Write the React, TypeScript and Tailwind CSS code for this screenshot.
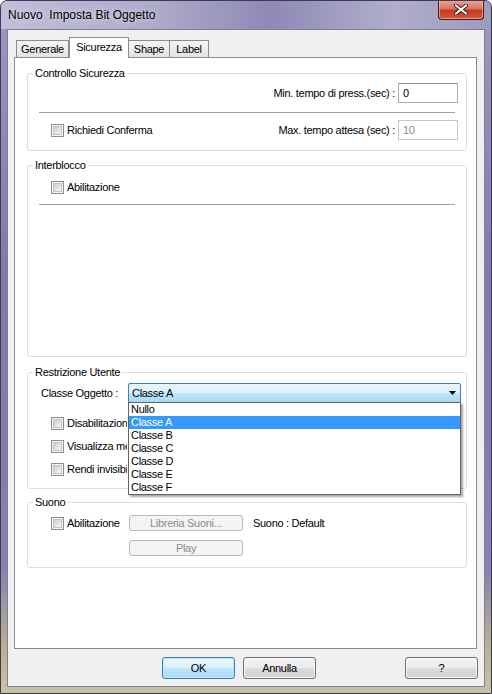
import React from "react";

function CheckBox({ label }: { label: string }) {
  return (
    <label className="flex items-center gap-[3px] whitespace-nowrap text-black">
      <span className="flex h-[13px] w-[13px] shrink-0 items-center justify-center border border-[#8e8f8f] bg-[#f4f4f4]">
        <span className="h-[9px] w-[9px] border border-[#c3c6ca] bg-linear-to-br from-[#c9ccd1] to-[#f7f7f7]" />
      </span>
      {label}
    </label>
  );
}

function Group({ title, children }: { title: string; children: React.ReactNode }) {
  return (
    <fieldset className="ml-[12px] mr-[9px] rounded-[3px] border border-[#d5dfe5]">
      <legend className="ml-[5px] px-[2px] leading-[14px]">{title}</legend>
      {children}
    </fieldset>
  );
}

function SmallButton({ children }: { children: React.ReactNode }) {
  return (
    <button className="flex h-[16px] w-[114px] shrink-0 items-center justify-center rounded-[3px] border border-[#b5b9bc] bg-[#f4f4f4] text-[#8b8b8b]">
      {children}
    </button>
  );
}

function DialogButton({ children, primary }: { children: React.ReactNode; primary?: boolean }) {
  return (
    <button
      className={
        primary
          ? "flex h-[22px] w-[73px] items-center justify-center rounded-[3px] border border-[#3c7fb1] bg-[linear-gradient(180deg,#eaf6fd_0%,#d9f0fc_50%,#bee6fd_51%,#a7d9f5_100%)] text-black shadow-[inset_0_0_0_1px_#c6e6f8]"
          : "flex h-[22px] w-[73px] items-center justify-center rounded-[3px] border border-[#707070] bg-[linear-gradient(180deg,#f2f2f2_0%,#ebebeb_50%,#dddddd_51%,#cfcfcf_100%)] text-black shadow-[inset_0_0_0_1px_#f8f8f8]"
      }
    >
      {children}
    </button>
  );
}

const options = ["Nullo", "Classe A", "Classe B", "Classe C", "Classe D", "Classe E", "Classe F"];

export default function App() {
  return (
    <div className="flex h-[694px] w-[492px] flex-col overflow-hidden rounded-t-[7px] border border-[#3c3b52] bg-[linear-gradient(180deg,#9c99c2_0%,#7e7aab_40%,#8581b0_82%,#b8b092_93%,#c9c2a4_100%)] px-[6px] pb-[6px] text-[11px] [font-family:'Liberation_Sans',Arial,sans-serif]">
      {/* title bar */}
      <div className="-mx-[6px] flex h-[28px] shrink-0 items-center bg-[linear-gradient(90deg,#c0bed9_0%,#afaccb_30%,#8e8ab5_55%,#b0aecb_80%,#9d9abe_100%)] pl-[7px] pr-[7px]">
        <span className="whitespace-pre text-[12px] text-black [text-shadow:0_0_6px_rgba(255,255,255,0.8)]">
          Nuovo  Imposta Bit Oggetto
        </span>
        <button className="-mt-px ml-auto flex h-[20px] w-[46px] items-center justify-center self-start rounded-b-[4px] border border-t-0 border-[#4a1c14] bg-[linear-gradient(180deg,#e9a897_0%,#d9735f_45%,#c4391f_55%,#d2593f_100%)] shadow-[inset_0_0_0_1px_rgba(255,220,210,0.5)]">
          <svg width="14" height="11" viewBox="0 0 14 11">
            <path d="M2 1.5 L12 9.5 M12 1.5 L2 9.5" stroke="#3b1a16" strokeWidth="4" strokeLinecap="round" />
            <path d="M2 1.5 L12 9.5 M12 1.5 L2 9.5" stroke="#ffffff" strokeWidth="2.2" strokeLinecap="round" />
          </svg>
        </button>
      </div>

      {/* client area */}
      <div className="flex flex-1 flex-col border border-[#7f7e95] bg-[#f0f0f0] pt-[7px] tracking-[-0.3px]">
        {/* tabs */}
        <div className="relative z-10 ml-[8px] flex h-[20px] items-end">
          <div className="flex h-[17px] w-[53px] items-center justify-center border border-b-0 border-[#898c95] bg-linear-to-b from-[#f4f4f4] to-[#e3e3e3]">
            Generale
          </div>
          <div className="-mb-px flex h-[21px] w-[60px] items-center justify-center border border-b-0 border-[#898c95] bg-white pb-[2px]">
            Sicurezza
          </div>
          <div className="flex h-[17px] w-[41px] items-center justify-center border border-b-0 border-l-0 border-[#898c95] bg-linear-to-b from-[#f4f4f4] to-[#e3e3e3]">
            Shape
          </div>
          <div className="flex h-[17px] w-[39px] items-center justify-center border border-b-0 border-l-0 border-[#898c95] bg-linear-to-b from-[#f4f4f4] to-[#e3e3e3]">
            Label
          </div>
        </div>

        {/* tab panel */}
        <div className="ml-[6px] mr-[7px] flex h-[592px] flex-col border border-[#898c95] bg-white pt-[8px]">
          <Group title="Controllo Sicurezza">
            <div className="flex flex-col pb-[10px]">
              <div className="mt-[3px] flex h-[20px] items-center justify-end gap-[3px] pr-[8px]">
                <span>Min. tempo di press.(sec) :</span>
                <div className="flex h-[20px] w-[60px] items-center border border-[#abadb3] border-t-[#8a8d94] bg-white pl-[4px]">0</div>
              </div>
              <div className="mx-[11px] mt-[9px] h-px bg-[#a0a0a0]" />
              <div className="mt-[7px] flex h-[20px] items-center pl-[23px] pr-[8px]">
                <CheckBox label="Richiedi Conferma" />
                <span className="ml-auto mr-[3px]">Max. tempo attesa (sec) :</span>
                <div className="flex h-[20px] w-[60px] items-center border border-[#c5c7cc] bg-white pl-[4px] text-[#8a8a8a]">10</div>
              </div>
            </div>
          </Group>

          <div className="mt-[7px]">
            <Group title="Interblocco">
              <div className="flex h-[184px] flex-col">
                <div className="mt-[9px] flex h-[13px] items-center pl-[23px]">
                  <CheckBox label="Abilitazione" />
                </div>
                <div className="mx-[11px] mt-[10px] h-px bg-[#a0a0a0]" />
              </div>
            </Group>
          </div>

          <div className="mt-[8px]">
            <Group title="Restrizione Utente">
              <div className="flex flex-col pb-[12px]">
                <div className="mt-[4px] flex h-[20px] items-center pl-[13px] pr-[5px]">
                  <span className="w-[87px] shrink-0">Classe Oggetto :</span>
                  <div className="relative z-20 flex h-[20px] flex-1 items-center rounded-[2px] border border-[#3c7fb1] bg-[linear-gradient(180deg,#eaf6fd_0%,#d9f0fc_50%,#bee6fd_51%,#a7d9f5_100%)] pl-[3px]">
                    <span>Classe A</span>
                    <svg className="ml-auto mr-[4px]" width="7" height="4" viewBox="0 0 7 4">
                      <path d="M0 0 H7 L3.5 4 Z" fill="#000" />
                    </svg>
                    <ul className="absolute left-[-1px] right-[-1px] top-full border border-[#646464] bg-white shadow-[2px_2px_2px_rgba(0,0,0,0.35)]">
                      {options.map((o) => (
                        <li
                          key={o}
                          className={
                            o === "Classe A"
                              ? "h-[13px] bg-[#3399ff] pl-[2px] leading-[13px] text-white"
                              : "h-[13px] pl-[2px] leading-[13px] text-black"
                          }
                        >
                          {o}
                        </li>
                      ))}
                    </ul>
                  </div>
                </div>
                <div className="mt-[14px] flex flex-col gap-[10px] pl-[23px]">
                  <div className="flex h-[13px] w-[76px] items-center overflow-hidden">
                    <CheckBox label="Disabilitazione" />
                  </div>
                  <div className="flex h-[13px] w-[76px] items-center overflow-hidden">
                    <CheckBox label="Visualizza messaggio" />
                  </div>
                  <div className="flex h-[13px] w-[76px] items-center overflow-hidden">
                    <CheckBox label="Rendi invisibile" />
                  </div>
                </div>
              </div>
            </Group>
          </div>

          <div className="mt-[6px]">
            <Group title="Suono">
              <div className="flex flex-col pb-[11px]">
                <div className="mt-[6px] flex h-[16px] items-center pl-[23px]">
                  <div className="w-[78px] shrink-0">
                    <CheckBox label="Abilitazione" />
                  </div>
                  <SmallButton>Libreria Suoni...</SmallButton>
                  <span className="ml-[10px]">Suono : Default</span>
                </div>
                <div className="mt-[9px] flex h-[16px] items-center pl-[101px]">
                  <SmallButton>Play</SmallButton>
                </div>
              </div>
            </Group>
          </div>
        </div>

        {/* dialog buttons */}
        <div className="mt-[8px] flex h-[22px] items-center pl-[154px] pr-[6px]">
          <DialogButton primary>OK</DialogButton>
          <div className="ml-[8px]">
            <DialogButton>Annulla</DialogButton>
          </div>
          <div className="ml-auto">
            <DialogButton>?</DialogButton>
          </div>
        </div>
      </div>
    </div>
  );
}
